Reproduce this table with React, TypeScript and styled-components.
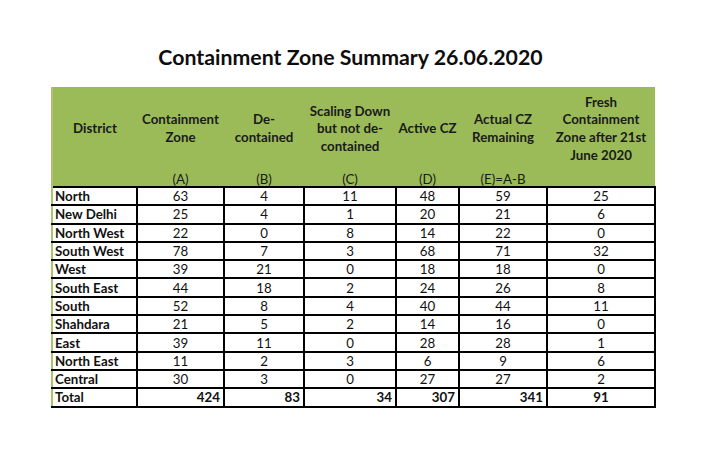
import styled, { createGlobalStyle } from "styled-components";

const GlobalStyle = createGlobalStyle`
  html, body {
    margin: 0;
    padding: 0;
    background: #ffffff;
  }
  body {
    font-family: Lato, "Open Sans", "Liberation Sans", sans-serif;
    color: #111;
  }
`;

const Page = styled.main`
  width: 721px;
  height: 475px;
  padding-top: 45px;
  box-sizing: border-box;
  display: flex;
  flex-direction: column;
  align-items: flex-start;
`;

const Title = styled.h1`
  align-self: center;
  margin: 0 20px 18px 0;
  font-size: 21.3px;
  line-height: 24px;
  font-weight: 700;
  color: #0d0d0d;
`;

const Table = styled.table`
  margin-left: 51px;
  width: 603px;
  table-layout: fixed;
  border-collapse: collapse;
  border-left: 2px solid #a9c36f;
  font-size: 13.3px;
`;

const HeadRow = styled.tr<{ $tall?: boolean }>`
  background: #9bbb59;
  height: ${(p) => (p.$tall ? "84px" : "16px")};
`;

const HeadCell = styled.th<{ $label?: boolean }>`
  padding: 0 2px;
  font-weight: ${(p) => (p.$label ? 400 : 700)};
  line-height: ${(p) => (p.$label ? "14px" : "17.6px")};
  vertical-align: ${(p) => (p.$label ? "bottom" : "middle")};
  text-align: center;
  color: #1a1a1a;
`;

const Row = styled.tr`
  height: 18.3px;
`;

const Cell = styled.td<{ $align?: "left" | "center" | "right"; $bold?: boolean }>`
  border: 2px solid #000;
  padding: 0 3px;
  line-height: 14px;
  text-align: ${(p) => p.$align ?? "center"};
  font-weight: ${(p) => (p.$bold ? 700 : 400)};
  white-space: nowrap;
  color: #111;
`;

const NameCell = styled(Cell)`
  border-left-color: #a9c36f;
  padding-left: 2px;
`;

const columns = [85, 87, 80, 92, 63, 88, 108];

const heads = [
  ["District"],
  ["Containment", "Zone"],
  ["De-", "contained"],
  ["Scaling Down", "but not de-", "contained"],
  ["Active CZ"],
  ["Actual CZ", "Remaining"],
  ["Fresh", "Containment", "Zone after 21st", "June 2020"],
];

const labels = ["", "(A)", "(B)", "(C)", "(D)", "(E)=A-B", ""];

const rows: [string, number, number, number, number, number, number][] = [
  ["North", 63, 4, 11, 48, 59, 25],
  ["New Delhi", 25, 4, 1, 20, 21, 6],
  ["North West", 22, 0, 8, 14, 22, 0],
  ["South West", 78, 7, 3, 68, 71, 32],
  ["West", 39, 21, 0, 18, 18, 0],
  ["South East", 44, 18, 2, 24, 26, 8],
  ["South", 52, 8, 4, 40, 44, 11],
  ["Shahdara", 21, 5, 2, 14, 16, 0],
  ["East", 39, 11, 0, 28, 28, 1],
  ["North East", 11, 2, 3, 6, 9, 6],
  ["Central", 30, 3, 0, 27, 27, 2],
];

const totals = [424, 83, 34, 307, 341];

export default function App() {
  return (
    <>
      <GlobalStyle />
      <Page>
        <Title>Containment Zone Summary 26.06.2020</Title>
        <Table>
          <colgroup>
            {columns.map((w, i) => (
              <col key={i} style={{ width: w }} />
            ))}
          </colgroup>
          <thead>
            <HeadRow $tall>
              {heads.map((lines, i) => (
                <HeadCell key={i}>
                  {lines.map((l, j) => (
                    <div key={j}>{l}</div>
                  ))}
                </HeadCell>
              ))}
            </HeadRow>
            <HeadRow>
              {labels.map((l, i) => (
                <HeadCell key={i} $label>
                  {l}
                </HeadCell>
              ))}
            </HeadRow>
          </thead>
          <tbody>
            {rows.map(([name, ...nums]) => (
              <Row key={name}>
                <NameCell $align="left" $bold>
                  {name}
                </NameCell>
                {nums.map((n, i) => (
                  <Cell key={i}>{n}</Cell>
                ))}
              </Row>
            ))}
            <Row>
              <NameCell $align="left" $bold>
                Total
              </NameCell>
              {totals.map((n, i) => (
                <Cell key={i} $align="right" $bold>
                  {n}
                </Cell>
              ))}
              <Cell $bold>91</Cell>
            </Row>
          </tbody>
        </Table>
      </Page>
    </>
  );
}
